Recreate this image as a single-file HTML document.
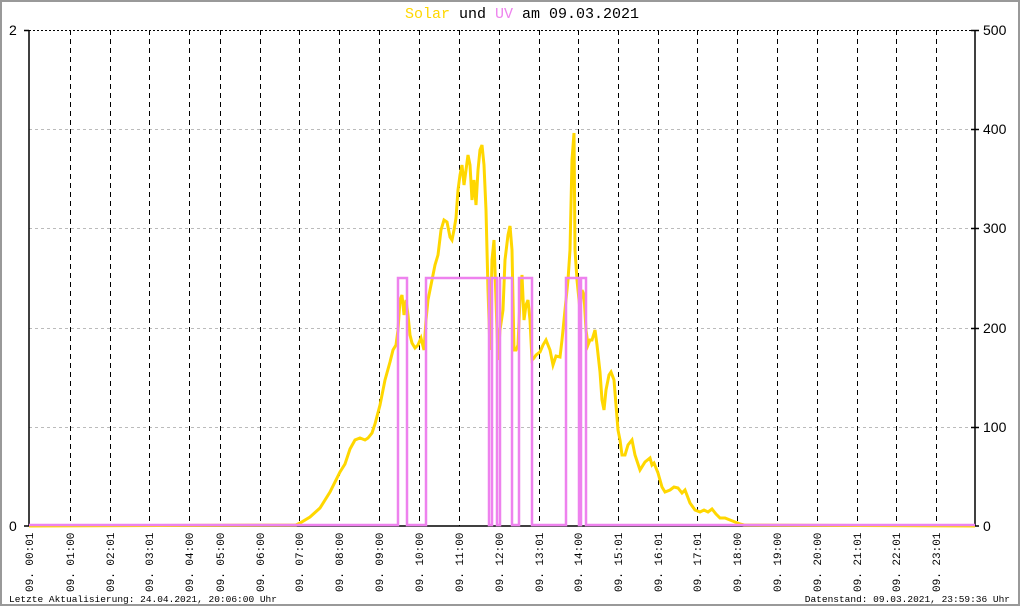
<!DOCTYPE html>
<html><head><meta charset="utf-8"><style>
html,body{margin:0;padding:0;background:#fff}
svg{display:block}
text{font-family:"Liberation Mono","DejaVu Sans Mono",monospace}
</style></head><body>
<svg width="1020" height="606" viewBox="0 0 1020 606" xmlns="http://www.w3.org/2000/svg">
<rect x="0" y="0" width="1020" height="606" fill="#fff"/>
<rect x="1" y="1" width="1018" height="604" fill="none" stroke="#999" stroke-width="2"/>
<text x="522" y="18" text-anchor="middle" font-size="15"><tspan fill="#ffd700">Solar</tspan> und <tspan fill="#ee82ee">UV</tspan> am 09.03.2021</text>
<g stroke="#bbb" stroke-dasharray="3,3" stroke-width="1">
<line x1="29" y1="129.5" x2="975" y2="129.5"/>
<line x1="29" y1="228.5" x2="975" y2="228.5"/>
<line x1="29" y1="328.5" x2="975" y2="328.5"/>
<line x1="29" y1="427.5" x2="975" y2="427.5"/>
</g>
<line x1="29" y1="30.5" x2="975" y2="30.5" stroke="#000" stroke-dasharray="2,2"/>
<g stroke="#000" stroke-dasharray="5,4" stroke-width="1">
<line x1="70.5" y1="30" x2="70.5" y2="526"/><line x1="110.5" y1="30" x2="110.5" y2="526"/><line x1="149.5" y1="30" x2="149.5" y2="526"/><line x1="189.5" y1="30" x2="189.5" y2="526"/><line x1="220.5" y1="30" x2="220.5" y2="526"/><line x1="260.5" y1="30" x2="260.5" y2="526"/><line x1="299.5" y1="30" x2="299.5" y2="526"/><line x1="339.5" y1="30" x2="339.5" y2="526"/><line x1="379.5" y1="30" x2="379.5" y2="526"/><line x1="419.5" y1="30" x2="419.5" y2="526"/><line x1="459.5" y1="30" x2="459.5" y2="526"/><line x1="499.5" y1="30" x2="499.5" y2="526"/><line x1="539.5" y1="30" x2="539.5" y2="526"/><line x1="578.5" y1="30" x2="578.5" y2="526"/><line x1="618.5" y1="30" x2="618.5" y2="526"/><line x1="658.5" y1="30" x2="658.5" y2="526"/><line x1="697.5" y1="30" x2="697.5" y2="526"/><line x1="737.5" y1="30" x2="737.5" y2="526"/><line x1="777.5" y1="30" x2="777.5" y2="526"/><line x1="817.5" y1="30" x2="817.5" y2="526"/><line x1="857.5" y1="30" x2="857.5" y2="526"/><line x1="896.5" y1="30" x2="896.5" y2="526"/><line x1="936.5" y1="30" x2="936.5" y2="526"/>
</g>
<g stroke="#000" stroke-width="1.5">
<line x1="29" y1="30" x2="29" y2="526"/>
<line x1="975" y1="30" x2="975" y2="526"/>
<line x1="29" y1="526" x2="975" y2="526"/>
<line x1="24" y1="30.5" x2="29" y2="30.5"/><line x1="24" y1="526" x2="29" y2="526"/>
<line x1="971" y1="30.5" x2="979" y2="30.5"/><line x1="971" y1="129.5" x2="979" y2="129.5"/><line x1="971" y1="228.5" x2="979" y2="228.5"/><line x1="971" y1="328.5" x2="979" y2="328.5"/><line x1="971" y1="427.5" x2="979" y2="427.5"/><line x1="975" y1="526" x2="979" y2="526"/>
</g>
<g font-size="14" fill="#000">
<text x="9" y="35" style="font-family:'Liberation Sans',sans-serif">2</text>
<text x="9" y="531" style="font-family:'Liberation Sans',sans-serif">0</text>
<text x="983" y="35" style="font-family:'Liberation Sans',sans-serif">500</text>
<text x="983" y="134" style="font-family:'Liberation Sans',sans-serif">400</text>
<text x="983" y="233" style="font-family:'Liberation Sans',sans-serif">300</text>
<text x="983" y="333" style="font-family:'Liberation Sans',sans-serif">200</text>
<text x="983" y="432" style="font-family:'Liberation Sans',sans-serif">100</text>
<text x="983" y="531" style="font-family:'Liberation Sans',sans-serif">0</text>
</g>
<polyline fill="none" stroke="#ffd700" stroke-width="3" stroke-linejoin="miter" points="29,526 296,525 300,523 310,517 320,508 330,492 340,472 345,464 350,449 355,440 360,438 365,440 368,438 372,433 375,424 380,405 385,380 390,362 393,350 396,345 398,330 400,300 402,295 404,315 406,300 408,315 410,335 412,343 415,348 418,345 421,338 424,350 426,320 428,300 432,280 435,265 438,255 441,230 444,220 447,222 450,237 452,240 454,230 456,218 458,190 460,175 462,165 464,185 466,170 468,155 470,165 472,200 474,180 476,205 478,170 480,150 482,145 484,165 486,210 488,290 490,350 492,260 494,240 496,300 498,360 500,330 503,310 505,260 508,235 510,226 512,250 514,350 516,350 518,345 520,300 522,275 524,320 526,305 528,300 530,320 532,360 534,358 536,355 540,352 543,345 546,340 548,345 550,350 553,365 556,356 560,357 562,340 564,320 566,300 568,280 570,250 572,160 574,133 575,250 577,280 579,300 580,310 582,290 584,295 586,330 588,345 590,340 592,340 595,330 597,345 600,372 602,400 604,410 606,390 609,375 611,372 614,380 618,430 620,440 622,455 625,455 628,445 632,440 635,455 640,470 645,462 650,458 652,465 654,463 658,473 662,487 665,492 670,490 674,487 678,488 682,493 685,490 690,503 695,510 700,512 704,510 708,512 712,509 716,514 720,518 725,518 730,520 735,522 740,524 744,525 975,526"/>
<polyline fill="none" stroke="#ee82ee" stroke-width="2.5" points="29,525 398,525 398,278 407,278 407,525 426,525 426,278 489,278 489,525 492,525 492,278 497,278 497,525 500,525 500,278 512,278 512,525 519,525 519,278 532,278 532,525 566,525 566,278 579,278 579,525 581,525 581,278 586,278 586,525 975,525"/>
<g font-size="11" fill="#000">
<text transform="translate(33,592) rotate(-90)">09. 00:01</text>
<text transform="translate(74,592) rotate(-90)">09. 01:00</text>
<text transform="translate(114,592) rotate(-90)">09. 02:01</text>
<text transform="translate(153,592) rotate(-90)">09. 03:01</text>
<text transform="translate(193,592) rotate(-90)">09. 04:00</text>
<text transform="translate(224,592) rotate(-90)">09. 05:00</text>
<text transform="translate(264,592) rotate(-90)">09. 06:00</text>
<text transform="translate(303,592) rotate(-90)">09. 07:00</text>
<text transform="translate(343,592) rotate(-90)">09. 08:00</text>
<text transform="translate(383,592) rotate(-90)">09. 09:00</text>
<text transform="translate(423,592) rotate(-90)">09. 10:00</text>
<text transform="translate(463,592) rotate(-90)">09. 11:00</text>
<text transform="translate(503,592) rotate(-90)">09. 12:00</text>
<text transform="translate(543,592) rotate(-90)">09. 13:01</text>
<text transform="translate(582,592) rotate(-90)">09. 14:00</text>
<text transform="translate(622,592) rotate(-90)">09. 15:01</text>
<text transform="translate(662,592) rotate(-90)">09. 16:01</text>
<text transform="translate(701,592) rotate(-90)">09. 17:01</text>
<text transform="translate(741,592) rotate(-90)">09. 18:00</text>
<text transform="translate(781,592) rotate(-90)">09. 19:00</text>
<text transform="translate(821,592) rotate(-90)">09. 20:00</text>
<text transform="translate(861,592) rotate(-90)">09. 21:01</text>
<text transform="translate(900,592) rotate(-90)">09. 22:01</text>
<text transform="translate(940,592) rotate(-90)">09. 23:01</text>
</g>
<text x="9" y="602" font-size="9.5">Letzte Aktualisierung: 24.04.2021, 20:06:00 Uhr</text>
<text x="1010" y="602" font-size="9.5" text-anchor="end">Datenstand: 09.03.2021, 23:59:36 Uhr</text>
</svg>
</body></html>
